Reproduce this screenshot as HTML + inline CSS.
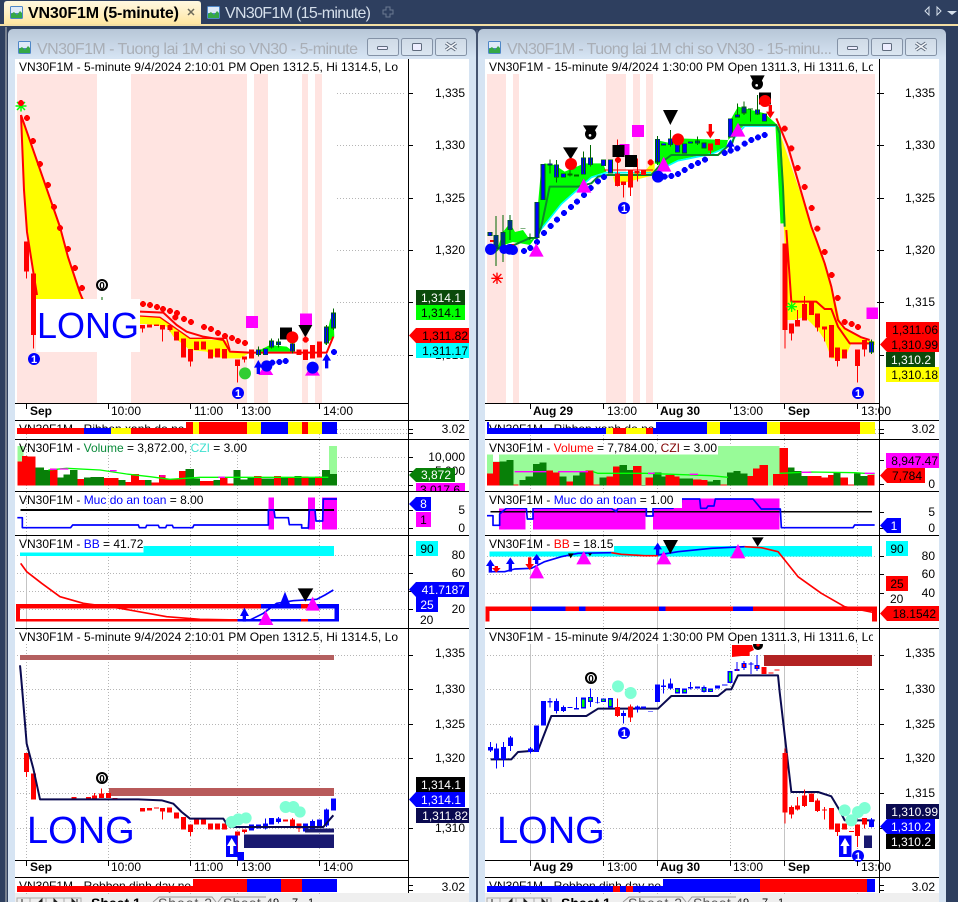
<!DOCTYPE html>
<html><head><meta charset="utf-8"><title>VN30F1M</title>
<style>
html,body{margin:0;padding:0;background:#2e3f5f;width:958px;height:902px;overflow:hidden}
svg{display:block}
text{font-family:"Liberation Sans",sans-serif;font-size:12px;fill:#000}
.e{text-anchor:end}
.b{font-weight:bold}
.w{fill:#fff}
.c{shape-rendering:crispEdges}
.wk{fill:none;stroke-width:3;shape-rendering:crispEdges}
.bd{fill:none;stroke-width:15;shape-rendering:crispEdges}
.ln{fill:none;stroke-linejoin:round}
.g{stroke:#b5b5b5;stroke-width:1;stroke-dasharray:1 2;fill:none}
.tt{fill:#a9aeb6;font-size:16px}
.bt{fill:url(#bg);stroke:#8492a6;stroke-width:1}
</style></head><body>
<svg width="958" height="902" viewBox="0 0 958 902" xmlns="http://www.w3.org/2000/svg">
<defs>
<linearGradient id="wg" gradientUnits="userSpaceOnUse" x1="0" y1="29" x2="0" y2="58"><stop offset="0" stop-color="#b7c6d7"/><stop offset="1" stop-color="#d6e4f3"/></linearGradient>
<linearGradient id="tg" x1="0" y1="0" x2="0" y2="1"><stop offset="0" stop-color="#fff8e0"/><stop offset=".5" stop-color="#fff0c4"/><stop offset="1" stop-color="#ffe6a0"/></linearGradient>
<linearGradient id="bg" x1="0" y1="0" x2="0" y2="1"><stop offset="0" stop-color="#cfdae6"/><stop offset="1" stop-color="#dbe6f1"/></linearGradient>
<g id="ic"><rect width="13" height="13" rx="1.5" fill="#4f87c7"/><rect x="1" y="1" width="11" height="6" fill="#dfeaf7"/><path d="M1 12V8L4 6L7 9L10 5L12 7V12z" fill="#35a845"/></g>
<path id="d" d="M-9-3L-3-9H3L9-3V3L3 9H-3L-9 3z"/>
<clipPath id="cl"><rect x="15" y="59" width="393" height="834"/></clipPath>
<clipPath id="cr"><rect x="485" y="59" width="388" height="834"/></clipPath>
<clipPath id="cr2"><rect x="485" y="59" width="394" height="834"/></clipPath>
</defs>

<!-- chrome -->
<rect width="958" height="902" fill="#2e3f5f"/>
<rect x="0" y="24" width="958" height="2" fill="#f4dfa4"/>
<path d="M4 24V4Q4 1 7 1H198Q201 1 201 4V24z" fill="url(#tg)"/>
<use href="#ic" x="10" y="6"/>
<text x="28" y="18" class="b" style="font-size:16px" textLength="151">VN30F1M (5-minute)</text>
<path d="M188 9L194 15M194 9L188 15" stroke="#6d6a5a" stroke-width="1.500"/>
<use href="#ic" x="207" y="6"/>
<text x="225" y="18" style="font-size:16px;fill:#d5dfeb" textLength="146">VN30F1M (15-minute)</text>
<path d="M386 7h4v3h3v4h-3v3h-4v-3h-3v-4h3z" fill="none" stroke="#6b7a92"/>
<path d="M929 7L925 11L929 15z" fill="none" stroke="#d5dfeb"/>
<path d="M937 7L941 11L937 15z" fill="none" stroke="#d5dfeb"/>
<path d="M947 11H957L952 15z" fill="#d5dfeb"/>
<rect x="5" y="27" width="2" height="875" fill="#77808f"/>
<rect x="8" y="29" width="468" height="880" rx="5" fill="url(#wg)"/>
<rect x="478" y="29" width="468" height="880" rx="5" fill="url(#wg)"/>
<rect x="476.500" y="30" width="1" height="872" fill="#5c6a80"/>
<use href="#ic" x="18" y="41"/>
<use href="#ic" x="488" y="41"/>
<text x="37" y="54" class="tt" textLength="321">VN30F1M - Tuong lai 1M chi so VN30 - 5-minute</text>
<text x="507" y="54" class="tt" textLength="325">VN30F1M - Tuong lai 1M chi so VN30 - 15-minu...</text>
<g>
<rect class="bt" x="367.500" y="38.500" width="31" height="17" rx="2"/><rect class="bt" x="401.500" y="38.500" width="31" height="17" rx="2"/><rect class="bt" x="435.500" y="38.500" width="31" height="17" rx="2"/>
<rect x="377.500" y="46.500" width="10" height="3" rx="1" fill="#eef" stroke="#5f6b7d"/><rect x="412.500" y="43.500" width="9" height="7" rx="1" fill="#eef" stroke="#5f6b7d"/><path d="M446 43L456 50M456 43L446 50" stroke="#5f6b7d" stroke-width="3.500"/><path d="M446 43L456 50M456 43L446 50" stroke="#f4f7fb" stroke-width="1.500"/>
<rect class="bt" x="837.500" y="38.500" width="31" height="17" rx="2"/><rect class="bt" x="871.500" y="38.500" width="31" height="17" rx="2"/><rect class="bt" x="905.500" y="38.500" width="31" height="17" rx="2"/>
<rect x="847.500" y="46.500" width="10" height="3" rx="1" fill="#eef" stroke="#5f6b7d"/><rect x="882.500" y="43.500" width="9" height="7" rx="1" fill="#eef" stroke="#5f6b7d"/><path d="M916 43L926 50M926 43L916 50" stroke="#5f6b7d" stroke-width="3.500"/><path d="M916 43L926 50M926 43L916 50" stroke="#f4f7fb" stroke-width="1.500"/>
</g>
<rect x="15" y="59" width="454" height="834" fill="#fff"/>
<rect x="485" y="59" width="454" height="834" fill="#fff"/>

<!-- ===== LEFT TOP PANE ===== -->
<g clip-path="url(#cl)">
<g fill="#ffe4e1" class="c"><rect x="17" y="74" width="80" height="329"/><rect x="131" y="74" width="116" height="329"/><rect x="254" y="74" width="14" height="329"/><rect x="302" y="74" width="6" height="329"/><rect x="315" y="74" width="7" height="329"/></g>
<path class="g" d="M337 93.500H406M337 145.500H406M337 198.500H406M337 250.500H406M337 302.500H406M337 355.500H406"/>
<polygon points="21,115 27,232 31,262 36,300 85,300 80,293 68,257 60,227" fill="#ff0"/>
<path class="ln" stroke="#f00" stroke-width="2" d="M21 115L60 227L68 257L80 293L84 303M21 115L24 190L27 232L33 270L37 295"/>
<path d="M15.500 106H26.500M21 100.500V111.500M17 102L25 110M25 102L17 110" stroke="#0f0" stroke-width="1.500"/>
<g fill="#f00"><use href="#d" transform="translate(21 103) scale(.33)"/><use href="#d" transform="translate(27 118) scale(.33)"/><use href="#d" transform="translate(33 141) scale(.33)"/><use href="#d" transform="translate(40 164) scale(.33)"/><use href="#d" transform="translate(48 185) scale(.33)"/><use href="#d" transform="translate(54 207) scale(.33)"/><use href="#d" transform="translate(60 228) scale(.33)"/><use href="#d" transform="translate(68 249) scale(.33)"/><use href="#d" transform="translate(75 268) scale(.33)"/><use href="#d" transform="translate(82 288) scale(.33)"/></g>
<g transform="translate(0 230) scale(.33333)">
<polygon points="420,258 480,262 520,290 570,325 680,332 690,365 750,368 720,385 680,385 640,380 620,365 570,360 545,340 520,320 500,290 440,282 420,282" fill="#ff0"/>
<polygon points="770,365 810,345 860,350 880,365" fill="#0f0"/>
<polygon points="975,345 990,270 1000,250 1003,320" fill="#0f0"/>
<path class="ln" stroke="#0ff" stroke-width="3" d="M770 368H880M920 368H975"/>
<path class="ln" stroke="#f00" stroke-width="6" d="M420 245L490 248L530 285L560 305L610 320L670 330L690 365L750 368L980 368L1000 320"/>
<path class="ln" stroke="#f00" stroke-width="4" d="M420 258L480 262L520 290L570 325H680L690 360"/>
<path class="bd" stroke="#f00" d="M80 35V125M100 130V315M428 285V295M448 283V293M470 283V288M488 285V298M510 285V300M530 305V332M550 325V382M571 357V395M590 335V360M610 335V358M632 358V385M652 355V383M673 357V385M712 388V408M733 380V388M755 358V385M897 358V375M917 358V390M938 345V385M958 335V383"/>
<path class="wk" stroke="#f00" d="M80 125V145M100 315V355M428 295V308M488 298V335M510 298V305M571 395V410M712 408V458M733 388V398"/>
<path class="bd" stroke="#060" d="M775 358V375M797 355V375M815 332V352M836 335V345M877 340V365M979 290V340M1000 248V295"/>
<path class="bd" stroke="#00f" style="stroke-width:10" d="M775 360V373M797 357V373M815 334V350M836 337V343M877 342V363M979 292V338M1000 250V293"/>
<path class="wk" stroke="#060" d="M775 350V380M815 325V355M836 325V352M877 325V370M979 285V345M1000 235V300"/>
<rect x="738" y="258" width="36" height="36" fill="#f0f" class="c"/><rect x="900" y="250" width="36" height="36" fill="#f0f" class="c"/>
<rect x="840" y="292" width="36" height="36" fill="#000" class="c"/>
<circle cx="877" cy="322" r="18" fill="#f00"/>
<polygon points="895,285 937,285 916,322" fill="#000"/>
<use href="#d" x="917" y="329" fill="#f00"/><use href="#d" x="526" y="262" fill="#f00"/>
<circle cx="735" cy="430" r="18" fill="#32cd32"/>
<polygon points="775,435 820,435 797,400" fill="#f0f"/><polygon points="915,437 960,437 937,400" fill="#f0f"/>
<g fill="#00f"><use href="#d" x="817" y="398"/><use href="#d" x="838" y="396"/><use href="#d" x="857" y="393"/><use href="#d" x="1002" y="366"/><circle cx="800" cy="408" r="17"/><circle cx="938" cy="413" r="18"/>
<path d="M775 390L788 413H780V432H770V413H762z"/><path d="M980 370L993 392H985V415H975V392H967z"/></g>
</g>
<rect x="36" y="299" width="104" height="53" fill="#fff"/>
<text x="37" y="338" style="font-size:36px;fill:#00f">LONG</text>
<g fill="#f00"><use href="#d" transform="translate(143 304) scale(.33)"/><use href="#d" transform="translate(150 305) scale(.33)"/><use href="#d" transform="translate(157 307) scale(.33)"/><use href="#d" transform="translate(163 309) scale(.33)"/><use href="#d" transform="translate(170 311) scale(.33)"/><use href="#d" transform="translate(177 313) scale(.33)"/><use href="#d" transform="translate(184 319) scale(.33)"/><use href="#d" transform="translate(191 322) scale(.33)"/><use href="#d" transform="translate(204 327) scale(.33)"/><use href="#d" transform="translate(211 329) scale(.33)"/><use href="#d" transform="translate(218 333) scale(.33)"/><use href="#d" transform="translate(225 336) scale(.33)"/><use href="#d" transform="translate(232 338) scale(.33)"/><use href="#d" transform="translate(238 341) scale(.33)"/><use href="#d" transform="translate(245 343) scale(.33)"/></g>
<circle cx="34" cy="359" r="6" fill="#00f"/><text x="34" y="363" text-anchor="middle" class="b w" style="font-size:11px">1</text>
<circle cx="238" cy="393" r="6" fill="#00f"/><text x="238" y="397" text-anchor="middle" class="b w" style="font-size:11px">1</text>
<circle cx="102" cy="285" r="5" fill="#fff" stroke="#000" stroke-width="2"/><text x="102" y="289" text-anchor="middle" class="b" style="font-size:10px">0</text>
<path d="M102 297V300" stroke="#060"/>
</g>
<rect x="15" y="59" width="385" height="15" fill="#fff"/>
<text x="19" y="71" textLength="379">VN30F1M - 5-minute 9/4/2024 2:10:01 PM Open 1312.5, Hi 1314.5, Lo</text>

<!-- left axis labels top -->
<path d="M408 93.500H413M408 145.500H413M408 198.500H413M408 250.500H413M408 302.500H413M408 355.500H413" stroke="#000"/>
<text class="e" x="465" y="97">1,335</text><text class="e" x="465" y="149">1,330</text><text class="e" x="465" y="202">1,325</text><text class="e" x="465" y="254">1,320</text><text class="e" x="465" y="359">1,310</text>
<rect x="416" y="290" width="49" height="15" fill="#0b4a0b" class="c"/><text class="e w" x="461" y="302">1,314.1</text>
<rect x="416" y="305" width="49" height="15" fill="#0f0" class="c"/><text class="e" x="461" y="317">1,314.1</text>
<rect x="416" y="343" width="53" height="15" fill="#0ff" class="c"/><text class="e" x="468" y="355">1,311.17</text>
<polygon points="409,335.500 416,328 469,328 469,343 416,343" fill="#f00"/><text class="e" x="468" y="340">1,311.82</text>

<!-- left x axis -->
<path d="M15 403.500H408M15 420.500H469M15 439.500H469M15 491.500H469M15 535.500H469M15 628.500H469M15 860.500H408M15 877.500H469M408.500 59V893" stroke="#000" class="c"/>
<path d="M26.500 404V409M108.500 404V409M190.500 404V409M237.500 404V409M319.500 404V409" stroke="#000"/>
<text x="30" y="415" class="b">Sep</text><text x="111" y="415">10:00</text><text x="194" y="415">11:00</text><text x="241" y="415">13:00</text><text x="323" y="415">14:00</text>
<!-- left ribbon -->
<text x="19" y="433">VN30F1M - Ribbon xanh do ne</text>
<g class="c"><rect x="17" y="428" width="67" height="6" fill="#f00"/><rect x="84" y="428" width="27" height="6" fill="#00f"/><rect x="111" y="428" width="20" height="6" fill="#ff0"/><rect x="131" y="428" width="55" height="6" fill="#f00"/>
<rect x="186" y="422" width="7" height="12" fill="#f00"/><rect x="193" y="422" width="6" height="12" fill="#ff0"/><rect x="199" y="422" width="48" height="12" fill="#f00"/><rect x="247" y="422" width="14" height="12" fill="#ff0"/><rect x="261" y="422" width="27" height="12" fill="#00f"/><rect x="288" y="422" width="14" height="12" fill="#ff0"/><rect x="302" y="422" width="6" height="12" fill="#f00"/><rect x="308" y="422" width="14" height="12" fill="#ff0"/><rect x="322" y="422" width="15" height="12" fill="#00f"/></g>
<path class="g" d="M337 429.500H407M337 433.500H407"/><path d="M408 429.500H413M408 433.500H413" stroke="#000"/>
<text class="e" x="465" y="433">3.02</text>

<!-- left volume -->
<path class="g" d="M26.500 434V491M108.500 440V491M190.500 440V491M237.500 440V491M319.500 434V491M338 457.500H407M338 471.500H407M338 485.500H407"/>
<g transform="translate(0 440) scale(.33333)">
<path class="c" fill="#98fb98" d="M52 18H70V136H52zM987 18H1011V136H987z"/>
<path class="c" fill="#f00" d="M52 65H66V136H52zM66 48H82V136H66zM82 50H107V136H82zM150 85H172V136H150zM232 117H252V136H232zM312 114H355V136H312zM377 126H393V136H377zM393 102H417V136H393zM417 120H435V136H417zM455 128H477V136H455zM477 105H497V136H477zM497 118H537V136H497zM537 93H557V136H537zM600 123H640V136H600zM660 113H682V136H660zM682 130H700V136H682zM762 108H785V136H762zM822 108H843V136H822zM864 113H884V136H864zM905 110H925V136H905zM945 110H966V136H945z"/>
<path class="c" fill="#088008" d="M107 82H132V136H107zM132 90H150V136H132zM172 112H190V136H172zM190 103H210V136H190zM210 90H232V136H210zM252 113H272V136H252zM272 111H312V136H272zM355 120H377V136H355zM435 120H455V136H435zM557 87H582V136H557zM582 115H600V136H582zM640 120H660V136H640zM700 90H722V136H700zM722 118H742V136H722zM742 113H762V136H742zM785 115H822V136H785zM843 113H864V136H843zM884 108H905V136H884zM925 113H945V136H925zM966 90H990V136H966zM990 102H1011V136H990z"/>
<path class="ln" stroke="#0f0" stroke-width="4" d="M145 90L200 85L300 90L380 102L450 110L510 118L600 112H985"/>
<path class="ln" stroke="#f0f" stroke-width="4" d="M150 88H170M180 87H205M330 92H350M480 108H495M655 112H675"/>
</g>
<text x="19" y="452" textLength="228"><tspan>VN30F1M - </tspan><tspan style="fill:#0a8a3a">Volume</tspan><tspan> = 3,872.00, </tspan><tspan style="fill:#40e0d0">CZI</tspan><tspan> = 3.00</tspan></text>
<path d="M408 457.500H413M408 471.500H413M408 485.500H413" stroke="#000"/>
<text class="e" x="465" y="461">10,000</text><text class="e" x="465" y="475">5,000</text>
<polygon points="409,475 416,468 455,468 455,482 416,482" fill="#088008"/><text class="e w" x="451" y="479">3,872</text>
<rect x="416" y="483" width="49" height="8" fill="#f0f" class="c"/><svg x="416" y="483" width="49" height="8"><text x="4" y="11">3,017.6</text></svg>

<!-- left muc do -->
<path class="g" d="M26.500 492V535M108.500 492V535M190.500 492V535M237.500 492V535M319.500 492V535M338 510.500H407M338 528.500H407"/>
<g transform="translate(0 440) scale(.33333)">
<path class="c" fill="#f0f" d="M805 173H822V268H805zM924 173H945V268H924zM966 173H1011V268H966z"/>
<path stroke="#000" stroke-width="5" d="M62 210H1002" class="c"/>
<path class="ln" stroke="#00f" stroke-width="5" d="M52 233H67V263H212L218 255H415L418 263H437L440 256H475L478 263H497L500 256H517L520 263H578L582 255H805V210H822L825 233H865L868 254H905V264H925L928 210H945L948 243H968L970 177H1011"/>
</g>
<text x="19" y="504"><tspan>VN30F1M - </tspan><tspan style="fill:#00f">Muc do an toan</tspan><tspan> = 8.00</tspan></text>
<path d="M408 510.500H413M408 528.500H413" stroke="#000"/>
<text class="e" x="465" y="514">5</text><text class="e" x="465" y="532">0</text>
<polygon points="409,504 416,497 431,497 431,511 416,511" fill="#00f"/><text x="423.500" y="508" text-anchor="middle" class="w">8</text>
<rect x="416" y="512" width="15" height="15" fill="#f0f" class="c"/><text x="423.500" y="524" text-anchor="middle">1</text>

<!-- left BB -->
<path class="g" d="M108.500 536V628M190.500 536V628M237.500 536V628M319.500 536V628M17 555.500H407M17 573.500H407M17 591.500H407M17 609.500H407"/>
<path d="M26.500 536V628" stroke="#c4c4c4"/>
<g transform="translate(0 440) scale(.33333)">
<path class="c" fill="#0ff" d="M60 318H1002V348H60z"/>
<rect x="60" y="300" width="370" height="37" fill="#fff" class="c"/>
<path class="c" fill="#f00" d="M48 492H783V506H48zM903 492H924V506H903zM48 537H712V545H48zM903 537H924V545H903zM48 492H60V545H48z"/>
<path class="c" fill="#00f" d="M783 492H903V506H783zM924 492H1017V506H924zM712 537H903V545H712zM924 537H1017V545H924zM1003 492H1017V545H1003z"/>
<path class="ln" stroke="#f00" stroke-width="5" d="M62 370L80 395L125 430L180 470L250 490L360 505L500 530L600 538L710 540"/>
<path class="ln" stroke="#00f" stroke-width="5" d="M750 540L790 520L830 490L880 482L950 478L975 465L1000 450"/>
<polygon points="835,505 875,505 855,455" fill="#00f"/>
<polygon points="893,445 940,445 916,485" fill="#000"/>
<polygon points="917,512 960,512 938,470" fill="#f0f"/>
<polygon points="775,555 820,555 797,512" fill="#f0f"/>
<path d="M733 503L747 528H738V545H728V528H720z" fill="#00f"/>
</g>
<text x="19" y="548"><tspan>VN30F1M - </tspan><tspan style="fill:#00f">BB</tspan><tspan> = 41.72</tspan></text>
<path d="M408 555.500H413M408 573.500H413M408 591.500H413M408 609.500H413" stroke="#000"/>
<text class="e" x="465" y="559">80</text><text class="e" x="465" y="577">60</text><text class="e" x="465" y="613">20</text>
<rect x="416" y="541" width="22" height="15" fill="#0ff" class="c"/><text x="427" y="553" text-anchor="middle">90</text>
<polygon points="409,589.500 416,582 469,582 469,597 416,597" fill="#00f"/><text class="e w" x="465" y="594">41.7187</text>
<rect x="416" y="597" width="22" height="15" fill="#00f" class="c"/><text x="427" y="609" text-anchor="middle" class="w">25</text>
<text x="420" y="624">20</text>

<!-- left bottom pane -->
<path class="g" d="M17 655.500H407M17 689.500H407M17 724.500H407M17 758.500H407M17 793.500H407M17 828.500H407M26.500 629V860M108.500 629V860M190.500 629V860M237.500 629V860M319.500 629V860"/>
<g clip-path="url(#cl)"><g transform="translate(0 672) scale(.33333)">
<path class="c" fill="#b46060" d="M60 -51H1002V-36H60z"/>
<path class="c" fill="#b85a5a" d="M327 348H1002V372H327z"/>
<path class="bd" stroke="#f00" d="M80 243V300M100 305V383M222 375V383M265 375V383M283 370V380M304 365V378M325 363V378M345 378V383M428 408V418M448 408V416M470 407V410M488 408V418M508 406V422M530 422V440M550 435V473M571 457V480M590 440V458M610 440V458M632 455V473M652 455V473M673 455V473M712 478V490M733 473V480M856 443V448M877 443V465M897 455V470"/>
<path class="wk" stroke="#f00" d="M80 300V315M283 363V370M304 350V365M488 418V442M571 480V492M712 490V540M733 480V484M877 438V443M897 470V480"/>
<path class="bd" stroke="#00f" d="M755 457V475M775 457V470M797 455V470M815 438V457M836 440V450M917 455V478M938 447V472M958 443V465M979 413V460M1000 380V416"/>
<path class="wk" stroke="#00f" d="M797 440V472M836 435V455M938 443V475M979 410V465"/>
<path class="ln" stroke="#0a0a50" stroke-width="6" d="M60 -20L62 0L68 70L80 215L100 290L120 382H415L485 385L520 395L545 420L570 440H670L680 455L690 465H970L1000 430"/>
<g fill="#7fffd4"><circle cx="695" cy="450" r="18"/><circle cx="715" cy="442" r="18"/><circle cx="738" cy="438" r="17"/><circle cx="857" cy="405" r="18"/><circle cx="880" cy="405" r="18"/><circle cx="900" cy="420" r="17"/></g>
<path class="c" fill="#191970" d="M732 488H1002V528H732zM915 470H1002V482H915z"/>
<path class="c" fill="#00f" d="M678 490H712V555H678zM712 540H732V565H712z"/>
<path fill="#fff" d="M695 498L709 522H700V546H690V522H681z"/>
</g>
<circle cx="102" cy="778" r="5" fill="#fff" stroke="#000" stroke-width="2"/><text x="102" y="782" text-anchor="middle" class="b" style="font-size:10px">0</text>
<text x="27" y="843" style="font-size:38px;fill:#00f">LONG</text>
</g>
<rect x="17" y="630" width="384" height="14" fill="#fff"/>
<text x="19" y="641" textLength="379">VN30F1M - 5-minute 9/4/2024 2:10:01 PM Open 1312.5, Hi 1314.5, Lo</text>
<path d="M408 655.500H413M408 689.500H413M408 724.500H413M408 758.500H413M408 828.500H413" stroke="#000"/>
<text class="e" x="465" y="657">1,335</text><text class="e" x="465" y="693">1,330</text><text class="e" x="465" y="728">1,325</text><text class="e" x="465" y="762">1,320</text><text class="e" x="465" y="832">1,310</text>
<rect x="416" y="777" width="49" height="15" fill="#000" class="c"/><text class="e w" x="461" y="789">1,314.1</text>
<polygon points="409,799.500 416,792 465,792 465,807 416,807" fill="#00f"/><text class="e w" x="461" y="804">1,314.1</text>
<rect x="416" y="808" width="53" height="15" fill="#0a0a50" class="c"/><text class="e w" x="468" y="820">1,311.82</text>
<path d="M26.500 861V866M108.500 861V866M190.500 861V866M237.500 861V866M319.500 861V866" stroke="#000"/>
<text x="30" y="871" class="b">Sep</text><text x="111" y="871">10:00</text><text x="194" y="871">11:00</text><text x="241" y="871">13:00</text><text x="323" y="871">14:00</text>
<text x="19" y="890">VN30F1M - Robbon dinh day ne</text>
<g class="c"><rect x="17" y="886" width="176" height="6" fill="#f00"/><rect x="193" y="879" width="54" height="13" fill="#f00"/><rect x="247" y="879" width="34" height="13" fill="#00f"/><rect x="281" y="879" width="21" height="13" fill="#f00"/><rect x="302" y="879" width="35" height="13" fill="#00f"/></g>
<path d="M408 885.500H413M408 890.500H413" stroke="#000"/><text class="e" x="465" y="891">3.02</text>

<!-- ===== RIGHT TOP PANE ===== -->
<g clip-path="url(#cr2)">
<g fill="#ffe4e1" class="c"><rect x="487" y="74" width="19" height="329"/><rect x="513" y="74" width="6" height="329"/><rect x="606" y="74" width="20" height="329"/><rect x="633" y="74" width="7" height="329"/><rect x="646" y="74" width="7" height="329"/><rect x="780" y="74" width="95" height="329"/></g>
<g transform="translate(478 0) scale(.33333)">
<polygon points="171,714 190,500 200,490 230,495 260,515 320,490 375,490 385,515 340,530 250,610 186,690" fill="#0f0"/>
<polygon points="60,741 75,696 96,669 111,696 135,690 156,720 171,714 156,735 105,726" fill="#0f0"/>
<polygon points="530,490 535,420 580,430 600,415 750,420 745,440 700,460 600,480 560,500" fill="#0f0"/>
<polygon points="750,420 760,355 780,320 860,340 895,372 800,375" fill="#0f0"/>
<polygon points="405,530 500,515 520,490 530,490 530,525 440,548 410,548" fill="#ff0"/>
<path class="ln" stroke="#0ff" stroke-width="5" d="M186 692L250 612L340 532L385 518H520M560 502L600 482L700 462L745 442L800 378H895"/>
<polygon points="895,368 1005,690 1030,750 1060,850 1090,980 1150,1015 1190,1025 1190,1035 1120,1030 1100,1075 1060,1075 1040,1020 1020,990 980,950 950,960 925,960 925,840 918,690 905,430" fill="#ff0"/>
<path d="M900 380L915 670" stroke="#0f0" stroke-width="15" fill="none"/>
<path class="ln" stroke="#0a8a2a" stroke-width="6" d="M54 753L66 741L102 738L156 714H177L190 680L215 560H300L340 550L360 530L390 525H520L560 480L580 465H720L750 438H760L780 375H895L905 400L915 560L920 680"/>
<path class="ln" stroke="#f00" stroke-width="6" d="M895 355L930 440L1000 680L1015 720L1040 790L1060 860L1080 960L1100 985L1150 1012L1175 1020"/>
<path class="ln" stroke="#f00" stroke-width="6" d="M925 690L932 790L940 905H1015L1040 927H1060L1080 980L1115 1030H1180"/>
<path class="ln" stroke="#f00" stroke-width="3" d="M378 510H525"/>
<path class="ln" stroke="#f00" stroke-width="6" d="M36 723H54M96 735H108"/>
<!-- blue candles -->
<path class="bd" stroke="#060" d="M36 696V708M54 705V747M75 696V750M96 660V690M177 606V714M195 492V600M216 490V496M235 493V533M256 520V533M316 472V524M337 472V495M376 478V498M397 478V520M539 417V487M557 430V436M577 415V435M598 430V458M620 430V460M637 425V430M658 422V430M678 428V445M757 355V412M778 343V352M798 320V340M838 328V343M859 340V365"/>
<path class="bd" stroke="#00f" style="stroke-width:10" d="M36 698V706M54 707V745M75 698V748M96 662V688M177 608V712M195 494V598M216 491V495M235 495V531M256 522V531M316 474V522M337 474V493M376 480V496M397 480V518M539 419V485M557 431V435M577 417V433M598 432V456M620 432V458M637 426V429M658 424V428M678 430V443M757 357V410M778 345V350M798 322V338M838 330V341M859 342V363"/>
<path class="bd" stroke="#060" style="stroke-width:15" d="M135 684V686M156 711V713M276 520V526M296 524V530M818 325V328"/>
<path class="wk" stroke="#060" d="M54 648V798M75 645V786M96 645V720M156 700V720M216 478V520M235 480V548M276 460V530M316 455V520M337 435V500M539 408V495M577 390V440M658 410V435M778 310V345M798 305V345M818 325V365M838 285V345"/>
<!-- red candles -->
<path class="bd" stroke="#f00" d="M418 520V558M437 545V555M458 512V563M477 513V520M497 512V525M697 430V452M718 417V435M921 730V990M940 970V1000M958 960V980M979 912V962M1000 905V945M1018 940V983M1040 980V988M1060 975V1073M1079 1043V1083M1100 1048V1075M1138 1048V1098M1160 1020V1048"/>
<path class="wk" stroke="#f00" d="M418 418V560M437 555V593M458 563V588M478 475V545M697 452V462M921 990V1045M940 1000V1022M958 930V960M979 888V912M1018 983V995M1040 988V1025M1079 1083V1100M1138 1098V1148M1160 1048V1070"/>
<path class="bd" stroke="#060" d="M1180 1025V1058"/><path class="bd" stroke="#00f" style="stroke-width:10" d="M1180 1027V1056"/><path class="wk" stroke="#060" d="M1180 1018V1062"/>
<!-- markers -->
<g fill="#00f"><use href="#d" x="218" y="678"/><use href="#d" x="237" y="659"/><use href="#d" x="258" y="639"/><use href="#d" x="279" y="621"/><use href="#d" x="297" y="605"/><use href="#d" x="318" y="585"/><use href="#d" x="338" y="564"/><use href="#d" x="360" y="544"/><use href="#d" x="378" y="531"/><use href="#d" x="560" y="530"/><use href="#d" x="580" y="528"/><use href="#d" x="600" y="522"/><use href="#d" x="620" y="510"/><use href="#d" x="640" y="498"/><use href="#d" x="660" y="489"/><use href="#d" x="681" y="479"/><use href="#d" x="740" y="459"/><use href="#d" x="758" y="452"/><use href="#d" x="778" y="445"/><use href="#d" x="800" y="431"/><use href="#d" x="820" y="420"/><use href="#d" x="840" y="412"/><use href="#d" x="860" y="405"/>
<use href="#d" x="138" y="753"/><use href="#d" x="157" y="744"/><use href="#d" x="177" y="726"/><use href="#d" x="198" y="699"/></g>
<g fill="#f00"><use href="#d" x="920" y="386"/><use href="#d" x="940" y="445"/><use href="#d" x="959" y="504"/><use href="#d" x="980" y="561"/><use href="#d" x="1001" y="624"/><use href="#d" x="1018" y="686"/><use href="#d" x="1040" y="756"/><use href="#d" x="1061" y="825"/><use href="#d" x="1079" y="894"/><use href="#d" x="1100" y="966"/><use href="#d" x="1121" y="972"/><use href="#d" x="1140" y="981"/><use href="#d" x="420" y="480"/><use href="#d" x="518" y="487"/></g>
<circle cx="38" cy="748" r="17" fill="#00f"/><circle cx="78" cy="748" r="14" fill="#00f"/><circle cx="95" cy="748" r="16" fill="#00f"/><circle cx="105" cy="750" r="15" fill="#00f"/>
<polygon points="153,770 197,770 175,730" fill="#f0f"/>
<rect x="462" y="375" width="36" height="36" fill="#f0f" class="c"/><rect x="425" y="432" width="30" height="33" fill="#f0f" class="c"/>
<rect x="403" y="435" width="36" height="36" fill="#000" class="c"/><rect x="441" y="465" width="36" height="36" fill="#000" class="c"/>
<polygon points="255,442 300,442 278,478" fill="#000"/><circle cx="279" cy="492" r="18" fill="#f00"/>
<polygon points="315,376 360,376 338,412" fill="#000"/><circle cx="338" cy="402" r="17" fill="#000"/><circle cx="336" cy="406" r="4" fill="#fff"/>
<polygon points="295,578 340,578 317,535" fill="#f0f"/>
<polygon points="535,515 580,515 557,470" fill="#f0f"/>
<circle cx="540" cy="530" r="18" fill="#00f"/>
<polygon points="555,330 600,330 577,375" fill="#000"/><circle cx="600" cy="418" r="18" fill="#f00"/>
<path d="M697 415L684 395H692V372H702V395H710z" fill="#f00"/><path d="M877 355L864 335H872V315H882V335H890z" fill="#f00"/>
<path d="M757 418L770 440H762V445H752V440H744z" fill="#00f"/>
<polygon points="757,410 802,410 780,368" fill="#f0f"/>
<polygon points="816,226 860,226 838,268" fill="#000"/><circle cx="838" cy="252" r="17" fill="#000"/><circle cx="836" cy="256" r="4" fill="#fff"/>
<rect x="843" y="277" width="36" height="36" fill="#000" class="c"/><circle cx="861" cy="303" r="18" fill="#f00"/>
<rect x="1165" y="922" width="35" height="35" fill="#f0f" class="c"/>
<path d="M925 920L957 920M941 904V936M930 909L952 931M952 909L930 931" stroke="#0f0" stroke-width="4"/>
<path d="M40 835L75 835M57 818V852M45 822L70 848M70 822L45 848" stroke="#f00" stroke-width="4"/>
</g>
<circle cx="624" cy="208" r="6" fill="#00f"/><text x="624" y="212" text-anchor="middle" class="b w" style="font-size:11px">1</text>
<circle cx="858" cy="393" r="6" fill="#00f"/><text x="858" y="397" text-anchor="middle" class="b w" style="font-size:11px">1</text>
</g>
<rect x="485" y="59" width="388" height="15" fill="#fff"/>
<g clip-path="url(#cr)"><text x="489" y="71" textLength="386">VN30F1M - 15-minute 9/4/2024 1:30:00 PM Open 1311.3, Hi 1311.6, Lo</text></g>

<path d="M879 93.500H884M879 145.500H884M879 198.500H884M879 250.500H884M879 302.500H884M879 355.500H884M877 93.500H879M877 145.500H879M877 198.500H879M877 250.500H879M877 302.500H879" stroke="#000"/>
<text class="e" x="935" y="97">1,335</text><text class="e" x="935" y="149">1,330</text><text class="e" x="935" y="202">1,325</text><text class="e" x="935" y="254">1,320</text><text class="e" x="935" y="306">1,315</text>
<rect x="886" y="322" width="53" height="15" fill="#f00" class="c"/><text class="e" x="938" y="334">1,311.06</text>
<polygon points="880,344.500 887,337 939,337 939,352 887,352" fill="#f00"/><text class="e" x="938" y="349">1,310.99</text>
<rect x="886" y="352" width="49" height="15" fill="#0b4a0b" class="c"/><text class="e w" x="931" y="364">1,310.2</text>
<rect x="886" y="367" width="53" height="15" fill="#ff0" class="c"/><text class="e" x="938" y="379">1,310.18</text>

<path d="M485 403.500H879M485 420.500H939M485 439.500H939M485 491.500H939M485 535.500H939M485 628.500H939M485 860.500H879M485 877.500H939M879.500 59V893" stroke="#000" class="c"/>
<path d="M530.500 404V409M603.500 404V409M657.500 404V409M730.500 404V409M784.500 404V409M857.500 404V409" stroke="#000"/>
<text x="533" y="415" class="b">Aug 29</text><text x="607" y="415">13:00</text><text x="660" y="415" class="b">Aug 30</text><text x="733" y="415">13:00</text><text x="788" y="415" class="b">Sep</text><text x="861" y="415">13:00</text>
<!-- right ribbon -->
<text x="489" y="433">VN30F1M - Ribbon xanh do ne</text>
<g class="c"><rect x="487" y="428" width="119" height="6" fill="#00f"/><rect x="487" y="422" width="2" height="6" fill="#00f"/><rect x="606" y="428" width="7" height="6" fill="#ff0"/><rect x="613" y="428" width="13" height="6" fill="#f00"/><rect x="626" y="428" width="20" height="6" fill="#ff0"/><rect x="646" y="428" width="7" height="6" fill="#f00"/><rect x="653" y="428" width="3" height="6" fill="#00f"/>
<rect x="656" y="422" width="51" height="12" fill="#00f"/><rect x="707" y="422" width="13" height="12" fill="#ff0"/><rect x="720" y="422" width="47" height="12" fill="#00f"/><rect x="767" y="422" width="13" height="12" fill="#ff0"/><rect x="780" y="422" width="80" height="12" fill="#f00"/><rect x="860" y="422" width="15" height="12" fill="#ff0"/></g>
<path class="g" d="M875 429.500H879M875 433.500H879M530.500 435V439M603.500 435V439M657.500 435V439M730.500 435V439M784.500 435V439M857.500 435V439"/>
<path d="M879 429.500H884M879 433.500H884" stroke="#000"/><text class="e" x="935" y="433">3.02</text>

<!-- right volume -->
<path class="g" d="M530.500 440V491M603.500 440V491M657.500 440V491M730.500 440V491M784.500 440V491M857.500 440V491"/>
<g transform="translate(478 440) scale(.33333)">
<path class="c" fill="#98fb98" d="M27 18H905V136H27z"/>
<rect x="27" y="14" width="693" height="30" fill="#fff" class="c"/>
<rect x="45" y="44" width="18" height="20" fill="#fff" class="c"/>
<path class="c" fill="#f00" d="M27 100H45V136H27zM45 66H65V136H45zM107 133H122V136H107zM205 92H225V136H205zM225 97H245V136H225zM265 125H285V136H265zM322 92H347V136H322zM347 133H365V136H347zM385 110H405V136H385zM405 80H425V136H405zM465 78H490V136H465zM503 112H525V136H503zM563 105H590V136H563zM590 110H605V136H590zM645 118H670V136H645zM670 120H688V136H670zM728 133H747V136H728zM808 108H825V136H808zM825 85H845V136H825zM845 75H870V136H845zM885 102H905V136H885zM905 24H930V136H905zM988 108H1030V136H988zM1030 112H1050V136H1030zM1050 105H1067V136H1050zM1088 113H1110V136H1088zM1110 133H1128V136H1110zM1168 105H1190V136H1168z"/>
<path class="c" fill="#088008" d="M65 65H85V136H65zM85 60H107V136H85zM125 120H143V136H125zM143 110H165V136H143zM165 72H185V136H165zM185 67H205V136H185zM245 110H265V136H245zM285 107H305V136H285zM305 95H322V136H305zM365 113H385V136H365zM425 75H447V136H425zM447 90H465V136H447zM490 135H503V136H490zM525 97H550V136H525zM550 110H563V136H550zM605 115H645V136H605zM688 125H705V136H688zM705 120H728V136H705zM747 97H767V136H747zM767 93H787V136H767zM787 100H808V136H787zM930 82H950V136H930zM950 93H970V136H950zM970 108H988V136H970zM1067 98H1088V136H1067zM1128 100H1148V136H1128zM1148 108H1168V136H1148z"/>
<path class="ln" stroke="#0f0" stroke-width="4" d="M345 95L360 100H500L700 107L750 112M905 100L1000 96L1130 98L1190 102"/>
<path class="ln" stroke="#f0f" stroke-width="4" d="M110 95H205M240 95H330M510 100H530M635 103H660M970 97H1000M1160 100H1190"/>
</g>
<text x="489" y="452" textLength="228"><tspan>VN30F1M - </tspan><tspan style="fill:#f00">Volume</tspan><tspan> = 7,784.00, </tspan><tspan style="fill:#800000">CZI</tspan><tspan> = 3.00</tspan></text>
<path d="M879 460.500H884M879 484.500H884" stroke="#000"/>
<rect x="886" y="453" width="53" height="15" fill="#f0f" class="c"/><text class="e" x="938" y="465">8,947.47</text>
<polygon points="880,475.500 887,468 925,468 925,483 887,483" fill="#f00"/><text class="e" x="922" y="480">7,784</text>
<text class="e" x="935" y="488">0</text>

<!-- right muc -->
<path class="g" d="M530.500 492V535M603.500 492V535M657.500 492V535M730.500 492V535M784.500 492V535M857.500 492V535"/>
<g transform="translate(478 440) scale(.33333)">
<path class="c" fill="#f0f" d="M63 205H143V268H63zM165 205H503V268H165zM525 205H585V268H525zM585 175H905V268H585z"/>
<path class="c" stroke="#000" stroke-width="5" d="M38 215H1182"/>
<path class="ln" stroke="#00f" stroke-width="5" d="M27 227H45V256H65V222L85 205H145L148 237H165V205H400L415 215L420 205H505V228H525V205H585L590 187H610V177H665L668 205H685L690 198H708L712 177H825L850 207H907L910 263H1125L1130 255H1190"/>
</g>
<rect x="487" y="493" width="195" height="15" fill="#fff"/>
<text x="489" y="504"><tspan>VN30F1M - </tspan><tspan style="fill:#00f">Muc do an toan</tspan><tspan> = 1.00</tspan></text>
<path d="M879 512.500H884M879 528.500H884" stroke="#000"/>
<text class="e" x="935" y="516">5</text><text class="e" x="935" y="532">0</text>
<polygon points="880,525.500 887,518 901,518 901,533 887,533" fill="#00f"/><text x="894" y="530" text-anchor="middle" class="w">1</text>

<!-- right BB -->
<path class="g" d="M603.500 536V628M730.500 536V628M857.500 536V628M487 556.500H877M487 574.500H877M487 593.500H877M487 609.500H877"/>
<path d="M530.500 536V628M657.500 536V628M784.500 536V628" stroke="#c4c4c4"/>
<g transform="translate(478 440) scale(.33333)">
<path class="c" fill="#0ff" d="M35 318H1182V350H35z"/>
<rect x="30" y="298" width="378" height="37" fill="#fff" class="c"/>
<path class="c" fill="#f00" d="M23 500H1197V513H23zM23 513H35V545H23zM1182 513H1197V545H1182z"/>
<path class="c" fill="#00f" d="M162 500H263V513H162zM303 500H323V513H303zM543 500H563V513H543zM765 500H825V513H765z"/>
<path class="ln" stroke="#00f" stroke-width="5" d="M35 395H80L110 387L160 385L200 365L250 350L300 340L400 338M540 345L600 335L700 325L800 320"/>
<path class="ln" stroke="#f00" stroke-width="5" d="M400 338L430 343L500 347H540M800 320L850 323L900 335L960 410L1030 460L1100 500L1190 518"/>
<polygon points="154,415 198,415 176,373" fill="#f0f"/><polygon points="295,373 340,373 317,333" fill="#f0f"/><polygon points="535,373 580,373 557,333" fill="#f0f"/><polygon points="757,355 802,355 780,312" fill="#f0f"/>
<polygon points="270,340 287,340 278,355" fill="#000"/><polygon points="330,340 342,340 336,348" fill="#000"/><polygon points="555,300 600,300 577,342" fill="#000"/><polygon points="822,292 857,292 839,320" fill="#000"/>
<g fill="#00f"><path d="M37 358L50 378H42V398H32V378H24z"/><path d="M97 352L110 372H102V395H92V372H84z"/><path d="M176 342L189 360H181V372H171V360H163z"/><path d="M539 308L552 328H544V345H534V328H526z"/></g>
<g fill="#f00"><path d="M55 398L42 384H50V378H60V384H68z"/><path d="M155 390L142 372H150V352H160V372H168z"/></g>
</g>
<text x="489" y="548"><tspan>VN30F1M - </tspan><tspan style="fill:#f00">BB</tspan><tspan> = 18.15</tspan></text>
<path d="M879 556.500H884M879 574.500H884M879 593.500H884" stroke="#000"/>
<rect x="886" y="541" width="22" height="15" fill="#0ff" class="c"/><text x="897" y="553" text-anchor="middle">90</text>
<text class="e" x="935" y="560">80</text><text class="e" x="935" y="578">60</text><text class="e" x="935" y="597">40</text>
<rect x="886" y="576" width="22" height="15" fill="#f00" class="c"/><text x="897" y="588" text-anchor="middle">25</text>
<text x="890" y="603">20</text>
<polygon points="880,613.500 887,606 939,606 939,621 887,621" fill="#f00"/><text class="e" x="936" y="618">18.1542</text>

<!-- right bottom -->
<path class="g" d="M487 655.500H877M487 689.500H877M487 724.500H877M487 758.500H877M487 793.500H877M487 828.500H877M603.500 629V860M730.500 629V860M857.500 629V860"/>
<path d="M530.500 629V860M657.500 629V860M784.500 629V860" stroke="#c4c4c4"/>
<g clip-path="url(#cr2)"><g transform="translate(478 672) scale(.33333)">
<path class="c" fill="#b22222" d="M858 -51H1182V-18H858z"/>
<circle cx="840" cy="-81" r="15" fill="#000"/><circle cx="840" cy="-81" r="5" fill="#f00"/>
<path fill="#f00" d="M762 -81H822L828 -66L815 -60V-48H790L762 -45z"/>
<path class="ln" stroke="#0a0a50" stroke-width="6" d="M38 262H100L120 240L180 235L220 132H325L360 110H540L580 72H720L745 52H760L780 10H900L905 60L915 145L940 360H1020L1060 373L1085 415L1100 445H1190"/>
<path class="bd" stroke="#00f" d="M38 225V235M55 230V262M76 225V262M97 197V222M157 230V240M176 160V240M196 87V160M216 87V92M235 87V117M256 105V117M276 105V108M296 108V112M316 77V110M337 75V90M358 90V92M376 80V90M397 78V107M437 123V132M478 103V112M497 103V110M518 117V119M539 37V90M557 40V45M577 35V50M598 48V65M620 50V65M637 45V50M658 43V50M678 45V60M698 50V60M718 40V50M740 38V40M756 -3V33M741 38V40M777 -9V-3M798 -27V-12M819 -25V-23M837 -21V-9M1180 443V465"/>
<path class="wk" stroke="#00f" d="M38 210V240M55 215V290M76 210V285M97 192V237M157 225V245M216 78V107M235 80V125M256 100V120M296 75V112M337 50V105M358 75V95M437 115V155M478 100V122M557 22V65M577 20V52M637 30V52M678 40V62M1180 438V467M777 -30V-3M798 -33V-6M819 -30V6M837 -51V-3"/>
<path class="bd" stroke="#0f0" style="stroke-width:7" d="M316 82V105M337 78V85M376 83V87M397 83V102M598 52V60M620 54V60M678 50V55M698 54V57M756 2V28"/>
<path class="bd" stroke="#f00" style="stroke-width:7" d="M777 -7V-5M798 -24V-15M837 -18V-12"/>
<path class="bd" stroke="#f00" d="M418 105V132M458 103V137M921 243V422M940 405V428M958 400V413M979 370V402M1000 365V390M1019 385V417M1040 412V415M1060 408V473M1079 455V480M1100 455V472M1120 477V480M1138 457V492M1159 438V457M858 -15V6M879 2V4M897 -7V-5"/>
<path class="wk" stroke="#f00" d="M418 80V135M458 97V150M921 230V455M940 400V440M958 375V415M979 352V405M1019 380V420M1040 405V442M1079 480V492M1138 492V525M1159 457V470"/>
<g fill="#7fffd4"><circle cx="420" cy="43" r="18"/><circle cx="458" cy="63" r="18"/><circle cx="1100" cy="415" r="18"/><circle cx="1120" cy="445" r="18"/><circle cx="1140" cy="420" r="18"/><circle cx="1160" cy="408" r="18"/></g>
<rect x="1083" y="490" width="37" height="65" fill="#00f" class="c"/><path fill="#fff" d="M1101 498L1115 522H1106V546H1096V522H1087z"/>
<rect x="1158" y="490" width="24" height="38" fill="#191970" class="c"/>
</g>
<circle cx="624" cy="733" r="6" fill="#00f"/><text x="624" y="737" text-anchor="middle" class="b w" style="font-size:11px">1</text>
<circle cx="858" cy="856" r="6" fill="#00f"/><text x="858" y="860" text-anchor="middle" class="b w" style="font-size:11px">1</text>
<circle cx="591" cy="678" r="5" fill="#fff" stroke="#000" stroke-width="2"/><text x="591" y="682" text-anchor="middle" class="b" style="font-size:10px">0</text>
<text x="497" y="843" style="font-size:38px;fill:#00f">LONG</text>
</g>
<rect x="485" y="630" width="388" height="14" fill="#fff"/>
<g clip-path="url(#cr)"><text x="489" y="641" textLength="386">VN30F1M - 15-minute 9/4/2024 1:30:00 PM Open 1311.3, Hi 1311.6, Lo</text></g>
<path d="M879 655.500H884M879 689.500H884M879 724.500H884M879 758.500H884M879 793.500H884M879 828.500H884" stroke="#000"/>
<text class="e" x="935" y="657">1,335</text><text class="e" x="935" y="693">1,330</text><text class="e" x="935" y="728">1,325</text><text class="e" x="935" y="762">1,320</text><text class="e" x="935" y="797">1,315</text>
<rect x="886" y="804" width="53" height="15" fill="#0a0a50" class="c"/><text class="e w" x="938" y="816">1,310.99</text>
<polygon points="880,826.500 887,819 935,819 935,834 887,834" fill="#00f"/><text class="e w" x="931" y="831">1,310.2</text>
<rect x="886" y="834" width="49" height="15" fill="#000" class="c"/><text class="e w" x="931" y="846">1,310.2</text>
<path d="M530.500 861V866M603.500 861V866M657.500 861V866M730.500 861V866M784.500 861V866M857.500 861V866" stroke="#000"/>
<text x="533" y="871" class="b">Aug 29</text><text x="607" y="871">13:00</text><text x="660" y="871" class="b">Aug 30</text><text x="733" y="871">13:00</text><text x="788" y="871" class="b">Sep</text><text x="861" y="871">13:00</text>
<text x="489" y="890">VN30F1M - Robbon dinh day ne</text>
<g class="c"><rect x="487" y="886" width="176" height="6" fill="#00f"/><rect x="613" y="886" width="7" height="6" fill="#f00"/><rect x="626" y="886" width="7" height="6" fill="#f00"/><rect x="663" y="879" width="97" height="13" fill="#00f"/><rect x="760" y="879" width="107" height="13" fill="#f00"/><rect x="867" y="879" width="8" height="13" fill="#00f"/></g>
<path d="M879 885.500H884M879 890.500H884" stroke="#000"/><text class="e" x="935" y="891">3.02</text>

<!-- sheet tab bars -->
<rect x="15" y="893" width="454" height="9" fill="#efefef"/>
<rect x="485" y="893" width="454" height="9" fill="#efefef"/>
<path class="g" d="M26.500 893V896M108.500 893V896M190.500 893V896M237.500 893V896M319.500 893V896M530.500 893V896M603.500 893V896M657.500 893V896M730.500 893V896M784.500 893V896M857.500 893V896"/>
<g>
<path d="M17 902V898H81V902M30 898V902M46 898V902M64 898V902" fill="none" stroke="#a8a8a8"/>
<path d="M22 902V899M42 899L39 902H42zM54 899L57 902H54zM72 899L75 902H72zM77 902V899" stroke="#222" fill="#222"/>
<text x="91" y="908" class="b" style="font-size:14px">Sheet 1</text>
<path d="M153 902L159 897H212L216 902M218 902L222 897H266" fill="none" stroke="#999"/>
<text x="158" y="908" style="font-size:14px;fill:#555" textLength="54">Sheet 2</text><text x="223" y="908" style="font-size:14px;fill:#555" textLength="50">Sheet 4</text><text x="273" y="906" style="font-size:11px">9</text><text x="292" y="906" style="font-size:11px">7</text><text x="308" y="906" style="font-size:11px">1</text>
<path d="M487 902V898H551V902M500 898V902M516 898V902M534 898V902" fill="none" stroke="#a8a8a8"/>
<path d="M492 902V899M512 899L509 902H512zM524 899L527 902H524zM542 899L545 902H542zM547 902V899" stroke="#222" fill="#222"/>
<text x="561" y="908" class="b" style="font-size:14px">Sheet 1</text>
<path d="M623 902L629 897H682L686 902M688 902L692 897H736" fill="none" stroke="#999"/>
<text x="628" y="908" style="font-size:14px;fill:#555" textLength="54">Sheet 2</text><text x="693" y="908" style="font-size:14px;fill:#555" textLength="50">Sheet 4</text><text x="743" y="906" style="font-size:11px">9</text><text x="762" y="906" style="font-size:11px">7</text><text x="778" y="906" style="font-size:11px">1</text>
</g>
</svg>
</body></html>
